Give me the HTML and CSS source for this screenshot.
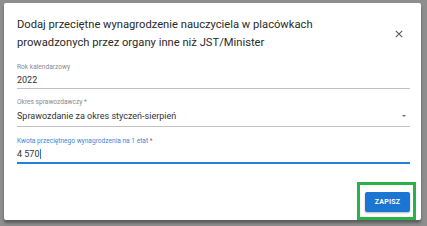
FILE: index.html
```html
<!DOCTYPE html>
<html lang="pl">
<head>
<meta charset="utf-8">
<title>Dialog</title>
<link rel="stylesheet" href="styles.css">
</head>
<body>
<div class="backdrop">
  <div class="dialog">
    <div class="header">
      <h2 class="title">Dodaj przeciętne wynagrodzenie nauczyciela w placówkach prowadzonych przez organy inne niż JST/Minister</h2>
      <button class="close" aria-label="Zamknij">
        <svg viewBox="0 0 10 10" width="8" height="8"><path d="M1 1L9 9M9 1L1 9" stroke="#555" stroke-width="1.3" fill="none"/></svg>
      </button>
    </div>
    <div class="content">
      <div class="field f1">
        <div class="label">Rok kalendarzowy</div>
        <div class="value">2022</div>
      </div>
      <div class="field f2">
        <div class="label">Okres sprawozdawczy *</div>
        <div class="value"><span>Sprawozdanie za okres styczeń-sierpień</span><span class="arrow"></span></div>
      </div>
      <div class="field f3 focused">
        <div class="label">Kwota przeciętnego wynagrodzenia na 1 etat <span class="req">*</span></div>
        <div class="value">4 570<span class="caret"></span></div>
      </div>
    </div>
    <div class="actions">
      <div class="highlight"><button class="save">ZAPISZ</button></div>
    </div>
  </div>
</div>
</body>
</html>
```
FILE: styles.css
```css
html, body {
  margin: 0;
  padding: 0;
}
body {
  width: 427px;
  height: 226px;
  overflow: hidden;
  background: #8e8e8e;
  font-family: Roboto, "Liberation Sans", sans-serif;
}
.backdrop {
  padding: 3px 0 0 4px;
}
.dialog {
  width: 417px;
  height: 217px;
  background: #fff;
  border-radius: 2px;
  box-shadow: 0 3px 3px rgba(0,0,0,0.35);
  display: flex;
  flex-direction: column;
  box-sizing: border-box;
}
.header {
  display: flex;
  align-items: center;
  padding: 13px 10px 0 13px;
}
.title {
  margin: 0;
  font-size: 11.2px;
  line-height: 18px;
  font-weight: 400;
  color: #2a2a2a;
  max-width: 330px;
}
.close {
  margin-left: auto;
  width: 24px;
  height: 24px;
  border: 0;
  padding: 0;
  background: transparent;
  display: flex;
  align-items: center;
  justify-content: center;
}
.content {
  padding: 11px 11px 0 13px;
  display: flex;
  flex-direction: column;
}
.field {
  border-bottom: 1px solid #c2c2c2;
  padding-bottom: 2px;
}
.label {
  font-size: 6.6px;
  line-height: 8px;
  color: #8a8a8a;
  white-space: nowrap;
}
.value {
  margin-top: 3px;
  font-size: 9px;
  line-height: 12px;
  color: #333;
  display: flex;
  align-items: center;
}
.f2 {
  margin-top: 9px;
  padding-bottom: 4px;
}
.f2 .value {
  margin-top: 4px;
  justify-content: space-between;
}
.arrow {
  width: 0;
  height: 0;
  border-left: 2.5px solid transparent;
  border-right: 2.5px solid transparent;
  border-top: 2.5px solid #6f6f6f;
  margin-right: 4px;
}
.f3 {
  margin-top: 10px;
  border-bottom: 2px solid #2a7fd9;
}
.f3 .label {
  color: #3b87dc;
}
.req {
  color: #e04848;
}
.caret {
  display: inline-block;
  width: 1px;
  height: 10px;
  background: #2a7fd9;
  margin-left: 0.5px;
}
.actions {
  margin-top: auto;
  display: flex;
  justify-content: flex-end;
  padding: 0 5px 0 0;
}
.highlight {
  border: 3px solid #27b347;
  padding: 7px 3px 5px 5px;
}
.save {
  display: block;
  width: 45px;
  height: 20px;
  border: 0;
  border-radius: 2px;
  background: #1a76d2;
  color: #fff;
  font-family: Roboto, "Liberation Sans", sans-serif;
  font-size: 7px;
  font-weight: 700;
  letter-spacing: 0.2px;
  padding: 0;
  box-shadow: 0 1px 2px rgba(0,0,0,0.3);
}
```
